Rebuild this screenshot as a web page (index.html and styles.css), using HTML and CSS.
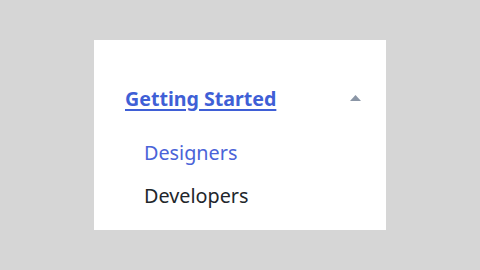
FILE: index.html
```html
<!DOCTYPE html>
<html>
<head>
<meta charset="utf-8">
<link rel="stylesheet" href="styles.css">
</head>
<body>
<nav class="card">
  <div class="section-head">
    <a class="section-link" href="#">Getting Started</a>
    <svg class="caret" width="11" height="6" viewBox="0 0 11 6"><path d="M0 6 L5.5 0 L11 6 Z" fill="#8b96a6"/></svg>
  </div>
  <ul class="sub-list">
    <li><a class="sub-link active" href="#">Designers</a></li>
    <li><a class="sub-link" href="#">Developers</a></li>
  </ul>
</nav>
</body>
</html>
```
FILE: styles.css
```css
html, body {
  margin: 0;
  padding: 0;
}
body {
  width: 480px;
  height: 270px;
  background: #d6d6d6;
  font-family: "Noto Sans", "Open Sans", sans-serif;
  display: flex;
  justify-content: center;
  padding-top: 40px;
  box-sizing: border-box;
}
.card {
  width: 292px;
  height: 190px;
  background: #ffffff;
  box-sizing: border-box;
  padding: 44px 25px 0 31px;
}
.section-head {
  display: flex;
  align-items: center;
  justify-content: space-between;
  height: 28px;
}
.section-link {
  font-size: 19.6px;
  font-weight: 700;
  color: #3f5fd6;
  text-decoration: underline;
  text-underline-offset: 3px;
  text-decoration-thickness: 2px;
}
.caret {
  display: block;
}
.sub-list {
  list-style: none;
  margin: 0;
  padding: 28px 0 0 19px;
  display: flex;
  flex-direction: column;
  gap: 17px;
}
.sub-link {
  font-size: 19.8px;
  text-decoration: none;
  color: #22262b;
  display: block;
  line-height: 26px;
}
.sub-link.active {
  color: #4a63d8;
}
```
